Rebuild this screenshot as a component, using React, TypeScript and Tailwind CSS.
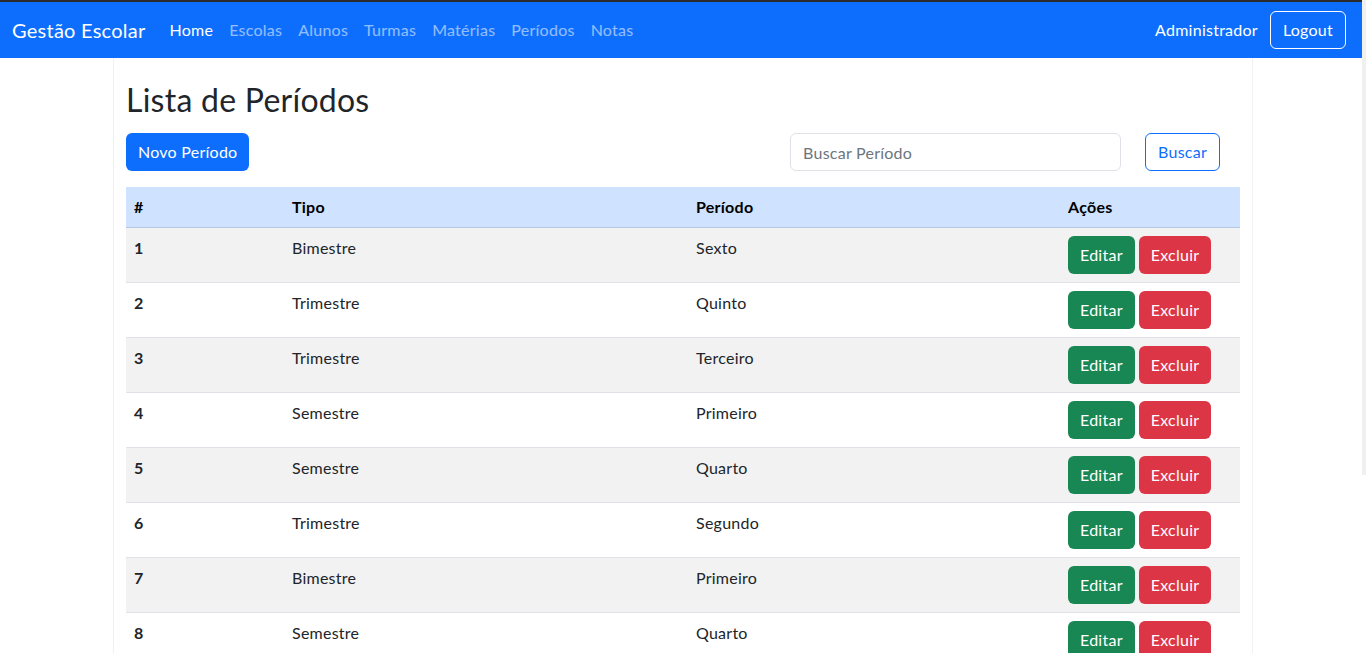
import React from 'react'

const navLinks = ['Escolas', 'Alunos', 'Turmas', 'Matérias', 'Períodos', 'Notas']

const periodos = [
  { id: 1, tipo: 'Bimestre', periodo: 'Sexto' },
  { id: 2, tipo: 'Trimestre', periodo: 'Quinto' },
  { id: 3, tipo: 'Trimestre', periodo: 'Terceiro' },
  { id: 4, tipo: 'Semestre', periodo: 'Primeiro' },
  { id: 5, tipo: 'Semestre', periodo: 'Quarto' },
  { id: 6, tipo: 'Trimestre', periodo: 'Segundo' },
  { id: 7, tipo: 'Bimestre', periodo: 'Primeiro' },
  { id: 8, tipo: 'Semestre', periodo: 'Quarto' },
]

export default function App() {
  return (
    <div
      className="relative h-[653px] overflow-hidden bg-white tracking-[0.25px] text-[#212529]"
      style={{ fontFamily: 'Lato, "Noto Sans", sans-serif' }}
    >
      <div className="h-[2px] bg-[#2b2b2b]" />

      {/* Navbar */}
      <nav className="flex h-[56px] items-center bg-[#0d6efd] pl-3 pr-5">
        <span className="mr-4 text-[20px] leading-[30px] text-white">Gestão Escolar</span>
        <div className="flex">
          <a className="px-2 text-[16px] text-white">Home</a>
          {navLinks.map((l) => (
            <a key={l} className="px-2 text-[16px] text-white/55">
              {l}
            </a>
          ))}
        </div>
        <div className="ml-auto flex items-center">
          <span className="text-[16px] text-white">Administrador</span>
          <button className="ml-3 h-[38px] rounded-md border border-white px-3 text-[16px] text-white">
            Logout
          </button>
        </div>
      </nav>

      {/* Content */}
      <div className="mx-auto h-full w-[1140px] border-x border-[#f1f1f1] px-3 pt-[23px]">
        <h2 className="mb-[14px] text-[32px] leading-[38px] font-normal">Lista de Períodos</h2>

        <div className="mb-4 flex items-center justify-between">
          <button className="h-[38px] rounded-md bg-[#0d6efd] px-3 text-[16px] text-white">
            Novo Período
          </button>
          <div className="mr-5 flex items-center gap-6">
            <input
              className="h-[38px] w-[331px] rounded-md border border-[#dee2e6] px-3 text-[16px] placeholder:text-[#6c757d]"
              placeholder="Buscar Período"
            />
            <button className="h-[38px] rounded-md border border-[#0d6efd] px-3 text-[16px] text-[#0d6efd]">
              Buscar
            </button>
          </div>
        </div>

        <table className="w-full border-collapse text-[16px]">
          <colgroup>
            <col className="w-[158px]" />
            <col className="w-[404px]" />
            <col className="w-[372px]" />
            <col />
          </colgroup>
          <thead>
            <tr className="border-b border-[#b6c8e6] bg-[#cfe2ff] text-left text-black">
              <th className="px-2 py-2 leading-6 font-bold">#</th>
              <th className="px-2 py-2 leading-6 font-bold">Tipo</th>
              <th className="px-2 py-2 leading-6 font-bold">Período</th>
              <th className="px-2 py-2 leading-6 font-bold">Ações</th>
            </tr>
          </thead>
          <tbody>
            {periodos.map((p, i) => (
              <tr
                key={p.id}
                className={`border-b border-[#dee2e6] align-top ${i % 2 === 0 ? 'bg-[#f2f2f2]' : 'bg-white'}`}
              >
                <td className="px-2 py-2 leading-6 font-bold">{p.id}</td>
                <td className="px-2 py-2 leading-6">{p.tipo}</td>
                <td className="px-2 py-2 leading-6">{p.periodo}</td>
                <td className="px-2 py-2 leading-6">
                  <div className="flex gap-1">
                    <button className="h-[38px] rounded-md bg-[#198754] px-3 text-white">Editar</button>
                    <button className="h-[38px] rounded-md bg-[#dc3545] px-3 text-white">Excluir</button>
                  </div>
                </td>
              </tr>
            ))}
          </tbody>
        </table>
      </div>

      {/* overlay scrollbar */}
      <div className="absolute top-0 right-0 h-[475px] w-[4px] bg-[#f0f0f0]" />
    </div>
  )
}
